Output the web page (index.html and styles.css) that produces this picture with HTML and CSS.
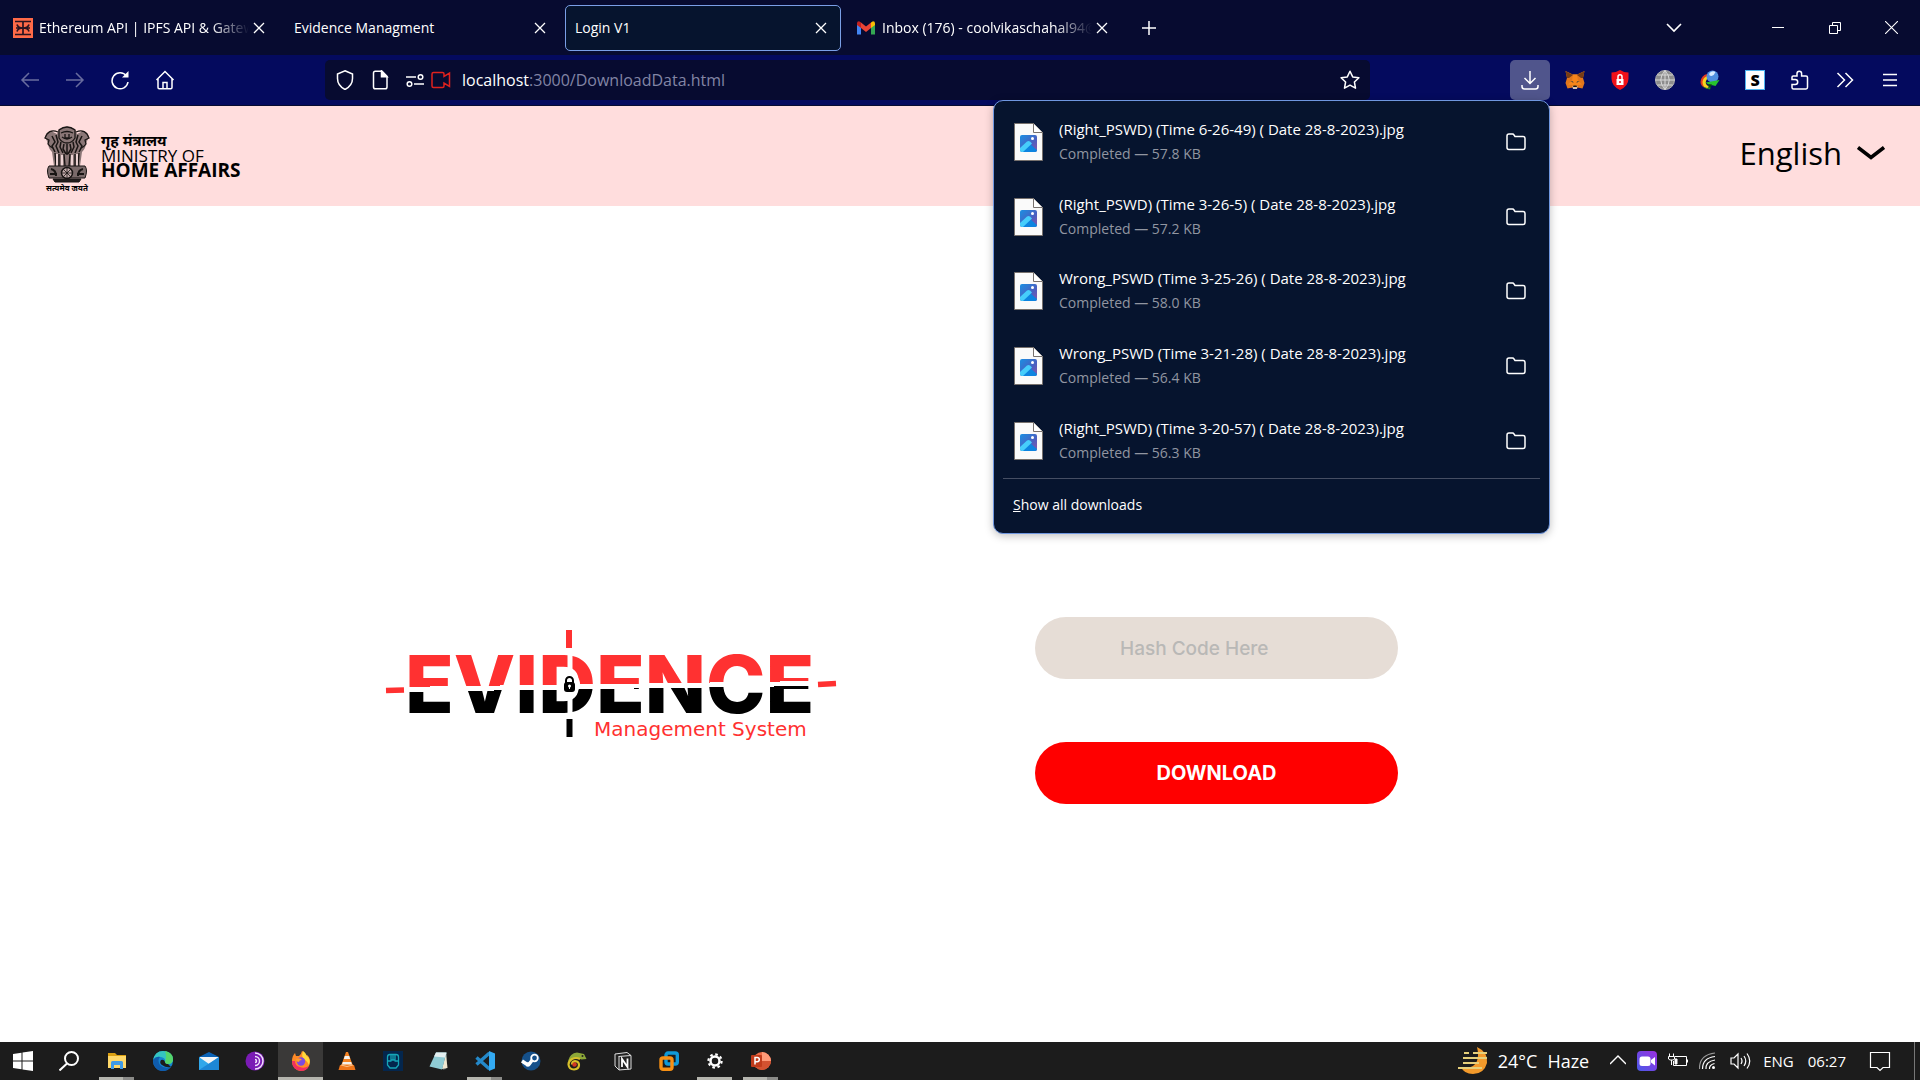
FILE: index.html
```html
<!DOCTYPE html>
<html lang="en">
<head>
<meta charset="utf-8">
<title>Login V1</title>
<link rel="stylesheet" href="styles.css">
</head>
<body>
<svg class="defs" aria-hidden="true">
  <linearGradient id="pic-sky" x1="0" y1="0" x2="1" y2="1"><stop offset="0" stop-color="#1a8fe3"/><stop offset=".6" stop-color="#4a5fc0"/><stop offset="1" stop-color="#8a55a8"/></linearGradient>
  <symbol id="file" viewBox="0 0 29 38">
    <path d="M.5.5h19l9 9v28h-28z" fill="#fafafa" stroke="#77716d"/>
    <path d="M19.500.5v9h9" fill="#fff" stroke="#77716d"/>
    <rect x="6" y="12" width="17" height="17" rx="2" fill="url(#pic-sky)"/>
    <circle cx="18.500" cy="15.500" r="1.500" fill="#fff"/>
    <path d="M8 29l8-8 7 6v0a2 2 0 0 1-2 2z" fill="#0d84e0"/>
    <path d="M6 25l7-6.500q1.500-1 3 0l2 2L9 29H8a2 2 0 0 1-2-2z" fill="#46cdfb"/>
  </symbol>
  <symbol id="folder" viewBox="0 0 20 20"><path d="M1 15.500V4A2 2 0 0 1 3 2h3.500q1 0 1.500 1l1 1.500h8a2 2 0 0 1 2 2v9a2 2 0 0 1-2 2H3a2 2 0 0 1-2-2z" fill="none" stroke="currentColor" stroke-width="1.500"/></symbol>
  <symbol id="x" viewBox="0 0 12 12"><path d="M1 1l10 10M11 1L1 11" stroke="currentColor" stroke-width="1.300" fill="none"/></symbol>
</svg>

<header class="browser">
  <div class="tabstrip">
    <div class="tab">
      <svg class="favicon" viewBox="0 0 20 20"><path fill="#ff6a48" d="M0 0h20v20H0z"/><path d="M2 3.500h16M2 16.500h16M10 4v12M3 10h14M4 6.500q1 3.500 6 3.500 5 0 6-3.500M4 13.500q1-3.500 6-3.500 5 0 6 3.500" stroke="#2a1420" stroke-width="1.700" fill="none"/></svg>
      <span class="tab-title faded">Ethereum API | IPFS API &amp; Gateway</span>
      <button class="tab-close" aria-label="Close tab"><svg><use href="#x"/></svg></button>
    </div>
    <div class="tab">
      <span class="tab-title">Evidence Managment</span>
      <button class="tab-close" aria-label="Close tab"><svg><use href="#x"/></svg></button>
    </div>
    <div class="tab active">
      <span class="tab-title">Login V1</span>
      <button class="tab-close" aria-label="Close tab"><svg><use href="#x"/></svg></button>
    </div>
    <div class="tab">
      <svg class="favicon" viewBox="0 0 20 20"><path fill="#4285f4" d="M1 5v11.500h4V9z"/><path fill="#34a853" d="M19 5v11.500h-4V9z"/><path fill="#ea4335" d="M5 4.500l5 4 5-4V10l-5 4-5-4z"/><path fill="#c5221f" d="M1 5.500Q1 3 3.500 3.400L5 4.500V10L1 7z"/><path fill="#fbbc04" d="M19 5.500q0-2.500-2.500-2.100L15 4.500V10l4-3z"/></svg>
      <span class="tab-title faded">Inbox (176) - coolvikaschahal94@gmail</span>
      <button class="tab-close" aria-label="Close tab"><svg><use href="#x"/></svg></button>
    </div>
    <button class="new-tab" aria-label="New tab"><svg width="16" height="16" viewBox="0 0 16 16"><path d="M8 1v14M1 8h14" stroke="#fff" stroke-width="1.500"/></svg></button>
    <button class="all-tabs" aria-label="List all tabs"><svg width="16" height="16" viewBox="0 0 16 16"><path d="M1 4l7 7 7-7" stroke="#fff" stroke-width="1.600" fill="none"/></svg></button>
    <div class="window-buttons">
      <button aria-label="Minimize"><svg width="12" height="12" viewBox="0 0 12 12"><path d="M0 5.500h12" stroke="#fff"/></svg></button>
      <button aria-label="Restore"><svg width="12" height="12" viewBox="0 0 12 12"><path d="M.5 3.500h8v8h-8zM3.500 3V.5h8v8H9" stroke="#fff" fill="none"/></svg></button>
      <button aria-label="Close"><svg width="13" height="13" viewBox="0 0 12 12"><path d="M0 0l12 12M12 0L0 12" stroke="#fff"/></svg></button>
    </div>
  </div>

  <nav class="toolbar">
    <div class="nav-buttons">
      <button class="tool dim" aria-label="Back"><svg viewBox="0 0 20 20"><path d="M19 10H2M9 3l-7 7 7 7"/></svg></button>
      <button class="tool dim" aria-label="Forward"><svg viewBox="0 0 20 20"><path d="M1 10h17M11 3l7 7-7 7"/></svg></button>
      <button class="tool" aria-label="Reload"><svg viewBox="0 0 20 20"><path d="M16.500 6A8 8 0 1 0 18 12"/><path d="M18.500 1v6.500H12z" fill="#fff" stroke="none"/></svg></button>
      <button class="tool" aria-label="Home"><svg viewBox="0 0 20 20"><path d="M1.500 10L10 1.500l8.500 8.500M3 9v8.500q0 1.200 1.200 1.200h11.600q1.200 0 1.200-1.200V9M8 18.500v-6h4v6"/></svg></button>
    </div>
    <div class="urlbar">
      <svg viewBox="0 0 20 20"><path d="M10 .8L17.500 4v4.500q0 7-7.500 11Q2.500 15.500 2.500 8.500V4z"/></svg>
      <svg viewBox="0 0 20 20"><path d="M3.500 3A1.800 1.800 0 0 1 5.300 1.200H12L17 6.200V17a1.800 1.800 0 0 1-1.800 1.800H5.300A1.800 1.800 0 0 1 3.500 17z"/><path d="M11.500 1v5.700H17z" fill="#fff"/></svg>
      <span class="permissions">
        <svg viewBox="0 0 20 20"><path d="M1 7h10M9 14h10"/><circle cx="15.500" cy="7" r="2.300"/><circle cx="4.500" cy="14" r="2.300"/></svg>
        <svg class="camera" viewBox="0 0 20 20"><path d="M2.500 2.500h9q1.500 0 1.500 1.500v2.500L18.500 3v13.500L13 13v3q0 1.500-1.500 1.500h-9Q1 17.500 1 16V4q0-1.500 1.500-1.500z"/></svg>
      </span>
      <span class="url"><b>localhost</b>:3000/DownloadData.html</span>
      <svg viewBox="0 0 20 20"><path d="M10 1.200l2.700 5.700 6.200.8-4.500 4.300 1.100 6.200L10 15.200l-5.500 3 1.100-6.200L1.100 7.700l6.200-.8z" stroke-linejoin="round"/></svg>
    </div>
    <div class="tools">
      <div class="downloads">
        <button class="tool pressed" aria-label="Downloads"><svg viewBox="0 0 20 20"><path d="M10 1v12M4.500 8l5.500 5.500L15.500 8M2 15v1.500Q2 19 4.500 19h11q2.500 0 2.500-2.500V15"/></svg></button>
        <section class="panel">
          <ul class="files">
            <li><svg class="file"><use href="#file"/></svg><div class="info"><p class="name">(Right_PSWD) (Time 6-26-49) ( Date 28-8-2023).jpg</p><p class="state">Completed — 57.8 KB</p></div><button class="open" aria-label="Show in folder"><svg><use href="#folder"/></svg></button></li>
            <li><svg class="file"><use href="#file"/></svg><div class="info"><p class="name">(Right_PSWD) (Time 3-26-5) ( Date 28-8-2023).jpg</p><p class="state">Completed — 57.2 KB</p></div><button class="open" aria-label="Show in folder"><svg><use href="#folder"/></svg></button></li>
            <li><svg class="file"><use href="#file"/></svg><div class="info"><p class="name">Wrong_PSWD (Time 3-25-26) ( Date 28-8-2023).jpg</p><p class="state">Completed — 58.0 KB</p></div><button class="open" aria-label="Show in folder"><svg><use href="#folder"/></svg></button></li>
            <li><svg class="file"><use href="#file"/></svg><div class="info"><p class="name">Wrong_PSWD (Time 3-21-28) ( Date 28-8-2023).jpg</p><p class="state">Completed — 56.4 KB</p></div><button class="open" aria-label="Show in folder"><svg><use href="#folder"/></svg></button></li>
            <li><svg class="file"><use href="#file"/></svg><div class="info"><p class="name">(Right_PSWD) (Time 3-20-57) ( Date 28-8-2023).jpg</p><p class="state">Completed — 56.3 KB</p></div><button class="open" aria-label="Show in folder"><svg><use href="#folder"/></svg></button></li>
          </ul>
          <button class="show-all"><u>S</u>how all downloads</button>
        </section>
      </div>
      <button class="tool" aria-label="MetaMask"><svg viewBox="0 0 20 20" stroke="none"><path fill="#e2761b" d="M.5 1L8 4.500h4L19.500 1 18 8l1.500 5-2 5.500-5-1L11 19H9l-1.500-1.500-5 1L.5 13 2 8z"/><path fill="#763d16" d="M.5 1L8 5 4 8H2zM19.500 1L12 5l4 3h2z"/><path fill="#f6851b" d="M8 4.500h4l1 6 4 4-4 .5-3 2-3-2-4-.5 4-4z"/><path fill="#233447" d="M5.500 11l2.500.5.500 1.500zM14.500 11l-2.500.5-.5 1.500z"/><path fill="#d7c1b3" d="M7.500 16h5L12 19H8z"/><path fill="#161616" d="M8.500 15.500h3l.5 1.500H8z"/></svg></button>
      <button class="tool" aria-label="Blocker"><svg viewBox="0 0 20 20" stroke="none"><path fill="#f01018" d="M10 0q4 2.500 8.500 2.500v6Q18.500 16 10 20 1.500 16 1.500 8.500v-6Q6 2.500 10 0z"/><path fill="#fff" d="M6.500 9h7v6h-7z"/><path d="M8 9V6.800a2 2 0 0 1 4 0V9" stroke="#fff" stroke-width="1.500"/><circle cx="10" cy="12" r="1" fill="#f01018"/></svg></button>
      <button class="tool" aria-label="Translate"><svg viewBox="0 0 20 20"><circle cx="10" cy="10" r="9.500" fill="#8d8d8d" stroke="#b5b5b5" stroke-width="1"/><path stroke="#d9d9d9" stroke-width="1" d="M10 .5v19M.5 10h19M2.500 5h15M2.500 15h15M10 .5q-8.500 9.500 0 19M10 .5q8.500 9.500 0 19"/></svg></button>
      <button class="tool" aria-label="IDM"><svg viewBox="0 0 20 20" stroke="none"><path fill="#e33b1e" d="M.5 12a8 8 0 0 1 7-8l1 3q-4 1-4 6l2 5Q.5 17 .5 12z"/><path fill="#f6d51f" d="M2.500 12A7 7 0 0 1 8 6v2.500q-3 2-2 5.500l3 3-2 1.500q-4.500-1.500-4.500-6.500z"/><path fill="#2b8a22" d="M1 14q2 4 8 4l2 1q-7 1-10-5z"/><circle cx="12.500" cy="6.500" r="6" fill="#4f8fe0"/><path fill="#d8ecff" d="M9.500 3q3-3 6-1-1 3-4 4-3 0-2-3z"/><path fill="#27c32c" d="M5.500 12.500L19.500 10l-4 6-4-1-2 4.500-1-5z"/><path fill="#0a3d0c" d="M8 14l4 .5-2 4z"/></svg></button>
      <button class="tool" aria-label="Stylus"><span class="s-badge">S</span></button>
      <button class="tool" aria-label="Extensions"><svg viewBox="0 0 20 20"><path d="M2 9.500V7.300Q2 6 3.300 6H7V3.500a2.300 2.300 0 0 1 4.600 0V6H16q1.500 0 1.500 1.500v9.800Q17.500 19 16 19H3.500Q2 19 2 17.500v-3h3.200a2.500 2.500 0 0 0 0-5z"/></svg></button>
      <button class="tool" aria-label="More tools"><svg viewBox="0 0 20 20"><path d="M2.500 3l7 7-7 7M10.500 3l7 7-7 7"/></svg></button>
      <button class="tool" aria-label="Menu"><svg viewBox="0 0 20 20"><path d="M3 4.500h14M3 10h14M3 15.500h14"/></svg></button>
    </div>
  </nav>
</header>

<header class="site">
  <div class="ministry">
    <div class="emblem">
      <svg width="46" height="57" viewBox="0 0 46 57" fill="none" stroke="#191514">
        <path d="M15 3q8-5 16 0l2 5 6-3q5 1 6 6l-3 6q0 5-4 9l-2 14H10L8 26q-4-4-4-9L1 11q1-5 6-6l6 3z" fill="#8a7676" stroke="none"/>
        <path d="M15 4q8-6 16 0v8q-3 5-8 5t-8-5zM17 7q6-3 12 0M18 11q5 4 10 0M21 8v4h4V8" stroke-width="1.300"/>
        <path d="M14 6Q7 3 3 8l-2 4 4 2-1 4q2 3 5 4M32 6q7-3 11 2l2 4-4 2 1 4q-2 3-5 4" stroke-width="1.300"/>
        <path d="M8 10l3 6-3 4 3 6M12 9l2 7-2 4 3 7M17 16l-1 5 3 6M20 18l-1 5 3 5M23 18v11M26 18l1 5-3 5M29 16l1 5-3 6M34 9l-2 7 2 4-3 7M38 10l-3 6 3 4-3 6" stroke-width="1.500"/>
        <path d="M11 27l1 13M15 28v12M31 28v12M35 27l-1 13M20 28l1 12M26 28l-1 12" stroke-width="1.400"/>
        <path d="M13 28v12M33 28v12M18 29v11M28 29v11" stroke="#f6dcdc" stroke-width="1.800"/>
        <path d="M5 40h36q3 4 0 12H5q-3-8 0-12z" fill="#7a6a6a"/>
        <circle cx="23" cy="47" r="5.500" fill="#c5adad" stroke-width="1.500"/><path d="M23 42v10M18 47h10M19.500 43.500l7 7M26.500 43.500l-7 7" stroke-width=".8"/>
        <path d="M7 43q5 1 5 7M39 43q-5 1-5 7M6 48h7M33 48h7" stroke-width="2"/>
        <path d="M9 53h28l-2 3H11z" fill="#221c1c"/>
      </svg>
      <span class="motto" lang="hi">सत्यमेव जयते</span>
    </div>
    <div class="ministry-name">
      <span class="hindi" lang="hi">गृह मंत्रालय</span>
      <span class="line">MINISTRY OF</span>
      <strong>HOME AFFAIRS</strong>
    </div>
  </div>
  <button class="language">English <svg width="28" height="16" viewBox="0 0 28 16"><path d="M1 2.500l13 10 13-10" fill="none" stroke="#000" stroke-width="3.600"/></svg></button>
</header>

<main class="content">
  <svg class="brand" viewBox="0 0 490 150" role="img" aria-label="Evidence Management System">
    <defs>
      <linearGradient id="split" gradientUnits="userSpaceOnUse" x1="200" y1="43" x2="201" y2="113">
        <stop offset="0" stop-color="#ff3131"/><stop offset=".45" stop-color="#ff3131"/>
        <stop offset=".45" stop-color="#fff"/><stop offset=".52" stop-color="#fff"/>
        <stop offset=".52" stop-color="#000"/><stop offset="1" stop-color="#000"/>
      </linearGradient>
    </defs>
    <text class="brand-word" x="35" y="103" fill="url(#split)">EVIDENCE</text>
    <path d="M200 40v65" stroke="#fff" stroke-width="5"/>
    <circle cx="199" cy="74" r="11" fill="#fff"/>
    <path d="M16 80.500l18-.5M448 74.500l18-1" stroke="#ff3131" stroke-width="5.500"/>
    <path d="M199 20v18" stroke="#ff3131" stroke-width="6"/>
    <path d="M199.500 109v18" stroke="#000" stroke-width="6"/>
    <rect x="194" y="72" width="11" height="10" rx="3"/>
    <path d="M196 73v-2.500a3.500 3.500 0 0 1 7 0V73" fill="none" stroke="#000" stroke-width="2"/>
    <circle cx="199.500" cy="76" r="1.500" fill="#fff"/><path d="M199.500 76v3" stroke="#fff"/>
    <text class="brand-sub" x="224" y="126">Management System</text>
  </svg>
  <form class="hash-form">
    <input type="text" aria-label="Hash code" placeholder="Hash Code Here">
    <button type="button">DOWNLOAD</button>
  </form>
</main>

<footer class="taskbar">
  <div class="apps">
    <button class="app" aria-label="Start"><svg viewBox="0 0 20 20" fill="#fff"><path d="M0 3l8.500-1.200v7.700H0zM9.500 1.600L20 0v9.500H9.500zM0 10.500h8.500v7.700L0 17zM9.500 10.500H20V20L9.500 18.400z"/></svg></button>
    <button class="app search" aria-label="Search"><svg viewBox="0 0 20 20" fill="none" stroke="#fff" stroke-width="2"><circle cx="12.500" cy="7.500" r="6.500"/><path d="M8 12.500l-7.500 7"/></svg></button>
    <button class="app multi" aria-label="File Explorer"><svg viewBox="0 0 20 20"><path d="M1 2h7l2 2h9v3H1z" fill="#dba012"/><path d="M1 5h18v12H1z" fill="#ffd869"/><path d="M4 18v-6.500q0-1.500 1.500-1.500h9q1.500 0 1.500 1.500V18h-3v-4H7v4z" fill="#3f9ae5"/></svg></button>
    <button class="app" aria-label="Edge"><svg viewBox="0 0 20 20"><circle cx="10" cy="10" r="10" fill="#1584cf"/><path d="M0 9Q2 0 10 0q9 0 10 8 0 5-5 5-3 0-3-2 1-4-4-5T0 9z" fill="#35c4c0"/><path d="M12 0q8 2 8 8 0 5-5 5-3 0-3-2 2-5 0-11z" fill="#55d66a"/><path d="M0 9q3-4 7-3-3 3 0 8 4 4 11 2-4 5-10 4Q0 18 0 9z" fill="#0f5cad"/><path d="M12 11q-1-3-4-2-2 3 1 5 4 3 9 2l-3-3q-3 0-3-2z" fill="#1c1c1c"/></svg></button>
    <button class="app" aria-label="Mail"><svg viewBox="0 0 20 20"><path d="M0 6l10-5 10 5v3H0z" fill="#0b62b5"/><path d="M1 6h18v8H1z" fill="#f4f4f4"/><path d="M0 6l10 7L20 6v13H0z" fill="#31a7ea"/><path d="M20 6L0 19h20z" fill="#1d87d6"/></svg></button>
    <button class="app" aria-label="Tor Browser"><svg viewBox="0 0 20 20" fill="none"><circle cx="10" cy="10" r="9.500" fill="#7a1bb5"/><path d="M10 2a8 8 0 0 1 0 16M10 5.500a4.500 4.500 0 0 1 0 9M10 8.500a1.500 1.500 0 0 1 0 3" stroke="#f1e2fb" stroke-width="1.500"/></svg></button>
    <button class="app current" aria-label="Firefox"><svg viewBox="0 0 20 20"><path d="M1 10q0-5 3-8l1 3 3 0Q10 4 11 0q3 1 4 5l1-1q3 2 3 7a9 9 0 0 1-18 0z" fill="#ff8a26"/><path d="M12 0q3 2 4 5 4 3 2 9-2-4-5-6T12 0z" fill="#ffd93b"/><path d="M1 10q0 9 9 10 6 0 8-5-5 3-9 1-5-1-5-6z" fill="#f2305f"/><circle cx="10" cy="10.500" r="4.200" fill="#7b4be0"/><path d="M5 8q4-2 6 1-3 0-3 2-3 0-3-3z" fill="#ff9d2c"/></svg></button>
    <button class="app" aria-label="VLC"><svg viewBox="0 0 20 20"><path d="M9 1h2l5 14H4z" fill="#f58220"/><path d="M7.800 5h4.400l1 3H6.800zM5.800 11h8.400l.8 2.500H5z" fill="#f4f1ec"/><path d="M3 14h14l1.500 5h-17z" fill="#f0761a"/><path d="M4 14q6 3 12 0" stroke="#ffc187" fill="none"/></svg></button>
    <button class="app" aria-label="Predator"><svg viewBox="0 0 20 20" fill="none"><path fill="#04264d" d="M0 0h20v20H0z"/><path d="M7 3.500h6q2.500 0 2.500 2.500v8L13 17H7l-2.500-3V6Q4.500 3.500 7 3.500zM10 3.500v6M5 10h3.500M11.500 10H15M8 4v5h4V4" stroke="#15a6b8" stroke-width="1.300"/></svg></button>
    <button class="app" aria-label="Notepad"><svg viewBox="0 0 20 20"><path d="M7 1l11 1-1 16-3 1z" fill="#4e5a5c"/><path d="M17 3l1.500 14-5.500 1z" fill="#efe6cf"/><path d="M7 1.500h10.500L13 18.500.5 15.500z" fill="#8fcbd4"/><path d="M7 1.500h10.500l-1.500 5L5 5.500z" fill="#e4eff0"/></svg></button>
    <button class="app multi" aria-label="VS Code"><svg viewBox="0 0 20 20"><path d="M14.500 2L1.500 13.500M1.500 6.500L14.500 18" stroke="#2489ca" stroke-width="3.400" fill="none"/><path d="M14 0l6 2.500v15L14 20z" fill="#33aaf2"/></svg></button>
    <button class="app" aria-label="Steam"><svg viewBox="0 0 20 20"><circle cx="10" cy="10" r="9.500" fill="#15508a"/><path d="M1 10l6 4M7.500 14L12 8" stroke="#fff" stroke-width="3.500" fill="none"/><circle cx="13.500" cy="7" r="3.300" fill="#15508a" stroke="#fff" stroke-width="1.800"/><circle cx="7" cy="13.500" r="2.200" fill="#fff"/></svg></button>
    <button class="app" aria-label="Chameleon"><svg viewBox="0 0 20 20" fill="none"><path d="M1 10Q3 2 10 1.500l7 1.500 2.500 5-5 .5-3-1Q7 6 1 10z" fill="#8da838"/><path d="M13 8q-4-2-8 0-3.500 2-3.500 5.500Q2 18.500 7 18.500q5-.5 5-4.500 0-3.500-4-3.800-3 .3-3 3.300" stroke="#d7c02a" stroke-width="2.200"/><circle cx="7.500" cy="13.500" r="2.300" fill="#d23822"/><circle cx="15.500" cy="5" r="1" fill="#222"/></svg></button>
    <button class="app" aria-label="Notion"><svg viewBox="0 0 20 20"><path d="M2 3l12-1.500 4 3V18l-12 1-4-4z" fill="#222" stroke="#ddd"/><path d="M5.500 5.500L18 4.500" stroke="#ddd"/><path d="M6 5.500V19" stroke="#ddd"/><path d="M9 16V8l5.500 8V7.500" stroke="#fff" stroke-width="1.800" fill="none"/></svg></button>
    <button class="app" aria-label="VMware"><svg viewBox="0 0 20 20" fill="none" stroke-width="3.400"><rect x="7" y="2" width="11.300" height="11" rx="2" stroke="#0f9ad8"/><rect x="2" y="7" width="11" height="11.300" rx="2" stroke="#f79013"/></svg></button>
    <button class="app open-app" aria-label="Settings"><svg viewBox="0 0 20 20" fill="none" stroke="#fff"><circle cx="10" cy="10" r="4.500" stroke-width="2.500"/><circle cx="10" cy="10" r="6.600" stroke-width="2.200" stroke-dasharray="2.600 2.584"/></svg></button>
    <button class="app multi" aria-label="PowerPoint"><svg viewBox="0 0 20 20"><circle cx="11" cy="10" r="9" fill="#ed6c47"/><path d="M11 1a9 9 0 0 1 9 9h-9z" fill="#ff9a78"/><path d="M2 10h18a9 9 0 0 1-18 0z" fill="#d35230"/><rect x="0" y="4" width="11" height="12" rx="1" fill="#c13b1b"/><path d="M4 13.500v-7h2.200a2 2 0 0 1 0 4.200H4" stroke="#fff" stroke-width="1.500" fill="none"/></svg></button>
  </div>
  <div class="tray">
    <span class="weather">
      <svg width="30" height="28" viewBox="0 0 30 28"><path d="M19 0q11 5 10 16-3 11-14 11Q6 27 3 20q12 3 16-6 2-6 0-14z" fill="#f39a2b"/><path d="M6 6h5M15 6h14M5 11h24M5 16h16M0 21h24" stroke="#e6cf7a" stroke-width="2.200"/></svg>
      <span>24°C</span><span>Haze</span>
    </span>
    <svg width="16" height="20" viewBox="0 0 16 20"><path d="M0 13l8-8 8 8" fill="none" stroke="#fff" stroke-width="1.400"/></svg>
    <svg width="20" height="20" viewBox="0 0 20 20"><linearGradient id="cam" x1="1" y1="0" x2="0" y2="1"><stop offset="0" stop-color="#9b30e0"/><stop offset="1" stop-color="#4a5ae8"/></linearGradient><rect width="20" height="20" rx="4" fill="url(#cam)"/><rect x="2.500" y="5.500" width="11" height="9.500" rx="2.500" fill="#fff"/><path d="M14 9l4-3v8.500l-4-3z" fill="#fff"/></svg>
    <svg width="20" height="20" viewBox="0 0 20 20" fill="none" stroke="#fff"><path d="M7 5.500h11.500v9h-13V10M19.500 8.500v3M1.500 2.500v3M5.500 2.500v3M.5 5.500h6V8L5 9H2L.5 8zM3.500 9v5"/><path d="M7 8h2v5H7z" fill="#fff"/></svg>
    <svg width="20" height="20" viewBox="0 0 20 20" fill="none" stroke="#fff" stroke-width="1.200"><path d="M10.500 18q-.5-4 5-5.500M7 18Q6.500 10.500 16 9M3.500 18Q3.500 7 16 5.500" /><path d="M.5 18Q0 4 16 2" stroke="#999"/><circle cx="14.500" cy="16.500" r="1.500" fill="#fff" stroke="none"/></svg>
    <svg width="22" height="20" viewBox="0 0 22 20" fill="none" stroke="#fff" stroke-width="1.200"><path d="M1 7h3l4-4v14l-4-4H1zM11 7q2 3 0 6M14 5q3.500 5 0 10M17 2.500q5.500 7.500 0 15"/></svg>
    <span class="lang">ENG</span>
    <time class="clock">06:27</time>
    <svg width="22" height="22" viewBox="0 0 22 22"><path d="M1.500 2.500h19v15H14l-3 3-3-3H1.500z" fill="none" stroke="#fff" stroke-width="1.200"/></svg>
    <span class="peek"></span>
  </div>
</footer>
</body>
</html>
```
FILE: styles.css
```css
* { box-sizing: border-box; }

body {
  margin: 0;
  min-height: 100vh;
  display: flex;
  flex-direction: column;
  background: #fff;
  font-family: "Open Sans", "Noto Sans", sans-serif;
}

button {
  border: 0;
  padding: 0;
  background: none;
  color: inherit;
  font: inherit;
  display: flex;
  align-items: center;
  justify-content: center;
}

svg { flex: none; display: block; }
.defs { position: absolute; width: 0; height: 0; }

/* Browser window */
.browser { color: #fff; background: #040a5e; }

.tabstrip {
  display: flex;
  align-items: center;
  gap: 5px;
  height: 55px;
  padding-left: 3px;
  background: #070b30;
}

.tab {
  display: flex;
  align-items: center;
  flex: 0 1 276px;
  min-width: 0;
  height: 46px;
  padding: 0 9px;
  border: 1px solid transparent;
  border-radius: 5px;
  font-size: 14px;
}

.tab.active { background: #06142e; border-color: #7a9fe6; }
.favicon { width: 20px; height: 20px; margin-right: 6px; }
.tab-title { flex: 1; overflow: hidden; white-space: nowrap; }
.faded { mask-image: linear-gradient(to right, #000 82%, transparent); }
.tab-close { width: 20px; height: 20px; }
.tab-close svg { width: 12px; height: 12px; }

.new-tab { width: 44px; height: 40px; }
.all-tabs { width: 40px; height: 40px; margin-left: auto; margin-right: 50px; }
.window-buttons { display: flex; }
.window-buttons button { width: 57px; height: 55px; }

.toolbar {
  display: flex;
  align-items: center;
  height: 51px;
  padding: 0 10px;
  border-bottom: 1px solid #070b30;
}

.nav-buttons, .tools { display: flex; gap: 5px; }
.tool { width: 40px; height: 40px; border-radius: 5px; }
.tool svg { width: 20px; height: 20px; fill: none; stroke: #fff; stroke-width: 1.5; }
.tool svg[stroke="none"] { stroke: none; }
.dim { opacity: 0.4; }
.pressed { background: #50558c; }

.urlbar {
  flex: 1;
  display: flex;
  align-items: center;
  gap: 15px;
  height: 40px;
  margin: 0 140px;
  padding: 0 10px;
  border-radius: 5px;
  background: #070b30;
  font-size: 16px;
}

.urlbar svg { width: 20px; height: 20px; fill: none; stroke: #fff; stroke-width: 1.5; }
.permissions { display: flex; gap: 6px; margin-right: -4px; }
.urlbar .camera { stroke: #e0221e; }
.url { flex: 1; color: #8285a5; }
.url b { color: #fff; font-weight: 400; }

.s-badge {
  width: 20px;
  height: 20px;
  border: 1px solid #4fb4ee;
  background: #fff;
  color: #000;
  font-size: 16px;
  font-weight: 800;
  line-height: 18px;
}

/* Downloads panel */
.downloads { position: relative; }

.panel {
  position: absolute;
  z-index: 2;
  top: 40px;
  right: 0;
  width: 557px;
  padding: 4px 9px;
  border: 1px solid #6f97e0;
  border-radius: 10px;
  background: #06142e;
  box-shadow: 0 2px 8px rgba(0, 0, 0, 0.25);
}

.files {
  display: grid;
  grid-auto-rows: 1fr;
  height: 374px;
  margin: 0;
  padding: 0;
  list-style: none;
  border-bottom: 1px solid #454e63;
}

.files li { display: flex; align-items: center; padding: 0 9px 0 11px; }
.file { width: 29px; height: 38px; margin-right: 16px; }
.info { flex: 1; }
.info p { margin: 0; white-space: nowrap; }
.name { font-size: 15px; line-height: 24px; }
.state { font-size: 14px; line-height: 26px; color: #9196a1; }
.open { width: 30px; height: 40px; }
.open svg { width: 20px; height: 20px; }
.show-all { height: 50px; padding: 0 10px; font-size: 14px; }

/* Site header */
.site {
  display: flex;
  justify-content: space-between;
  height: 100px;
  padding: 0 35px 0 44px;
  background: #ffdddd;
  color: #000;
}

.ministry { display: flex; gap: 11px; padding-top: 20px; }
.emblem { display: flex; flex-direction: column; align-items: center; width: 46px; }
.motto { font-size: 8px; line-height: 10px; font-weight: 700; white-space: nowrap; }
.ministry-name { display: flex; flex-direction: column; padding-top: 7px; font-size: 17px; line-height: 15px; }
.hindi { font-size: 15px; font-weight: 700; }
.ministry-name strong { font-size: 19px; font-weight: 700; }
.language { gap: 15px; height: 94px; font-size: 31px; }

/* Page content */
.content {
  flex: 1;
  display: flex;
  justify-content: center;
  align-items: flex-start;
  gap: 175px;
  padding: 404px 152px 60px 0;
}

.brand { width: 490px; height: 150px; }
.brand-word { font: 800 80px Inter, sans-serif; }
.brand-sub { font: 20px "DejaVu Sans", sans-serif; fill: #ff3131; }

.hash-form {
  display: flex;
  flex-direction: column;
  gap: 63px;
  width: 363px;
  padding-top: 7px;
}

.hash-form input, .hash-form button {
  height: 62px;
  border: 0;
  border-radius: 31px;
  font-family: Inter, sans-serif;
}

.hash-form input {
  width: 100%;
  padding: 0 85px;
  background: #e6ddd6;
  font-size: 19px;
  font-weight: 500;
}

.hash-form input::placeholder { color: #b9b8b6; opacity: 1; }
.hash-form button { background: #ff0000; color: #fff; font-size: 20px; font-weight: 700; }

/* Taskbar */
.taskbar {
  display: flex;
  justify-content: space-between;
  height: 38px;
  background: #1c1c1c;
  color: #fff;
}

.apps { display: flex; gap: 1px; }
.app { position: relative; width: 45px; height: 38px; }
.app svg { width: 20px; height: 20px; }
.search { margin-right: 2px; }
.current { background: #3a3938; }

.multi::after, .current::after, .open-app::after {
  content: "";
  position: absolute;
  bottom: 0;
  left: 5px;
  right: 5px;
  height: 3px;
  background: #b5b5ae;
}

.current::after { left: 0; right: 0; }
.multi::after { background: linear-gradient(to right, #b5b5ae 24px, #8b8b88 24px); }

.tray { display: flex; align-items: center; gap: 11px; font-size: 15px; }
.weather { display: flex; align-items: center; gap: 10px; margin-right: 10px; font-size: 18px; }
.clock { margin: 0 12px 0 3px; }
.peek { width: 6px; height: 38px; margin-left: 12px; border-left: 1px solid #777; }
```
